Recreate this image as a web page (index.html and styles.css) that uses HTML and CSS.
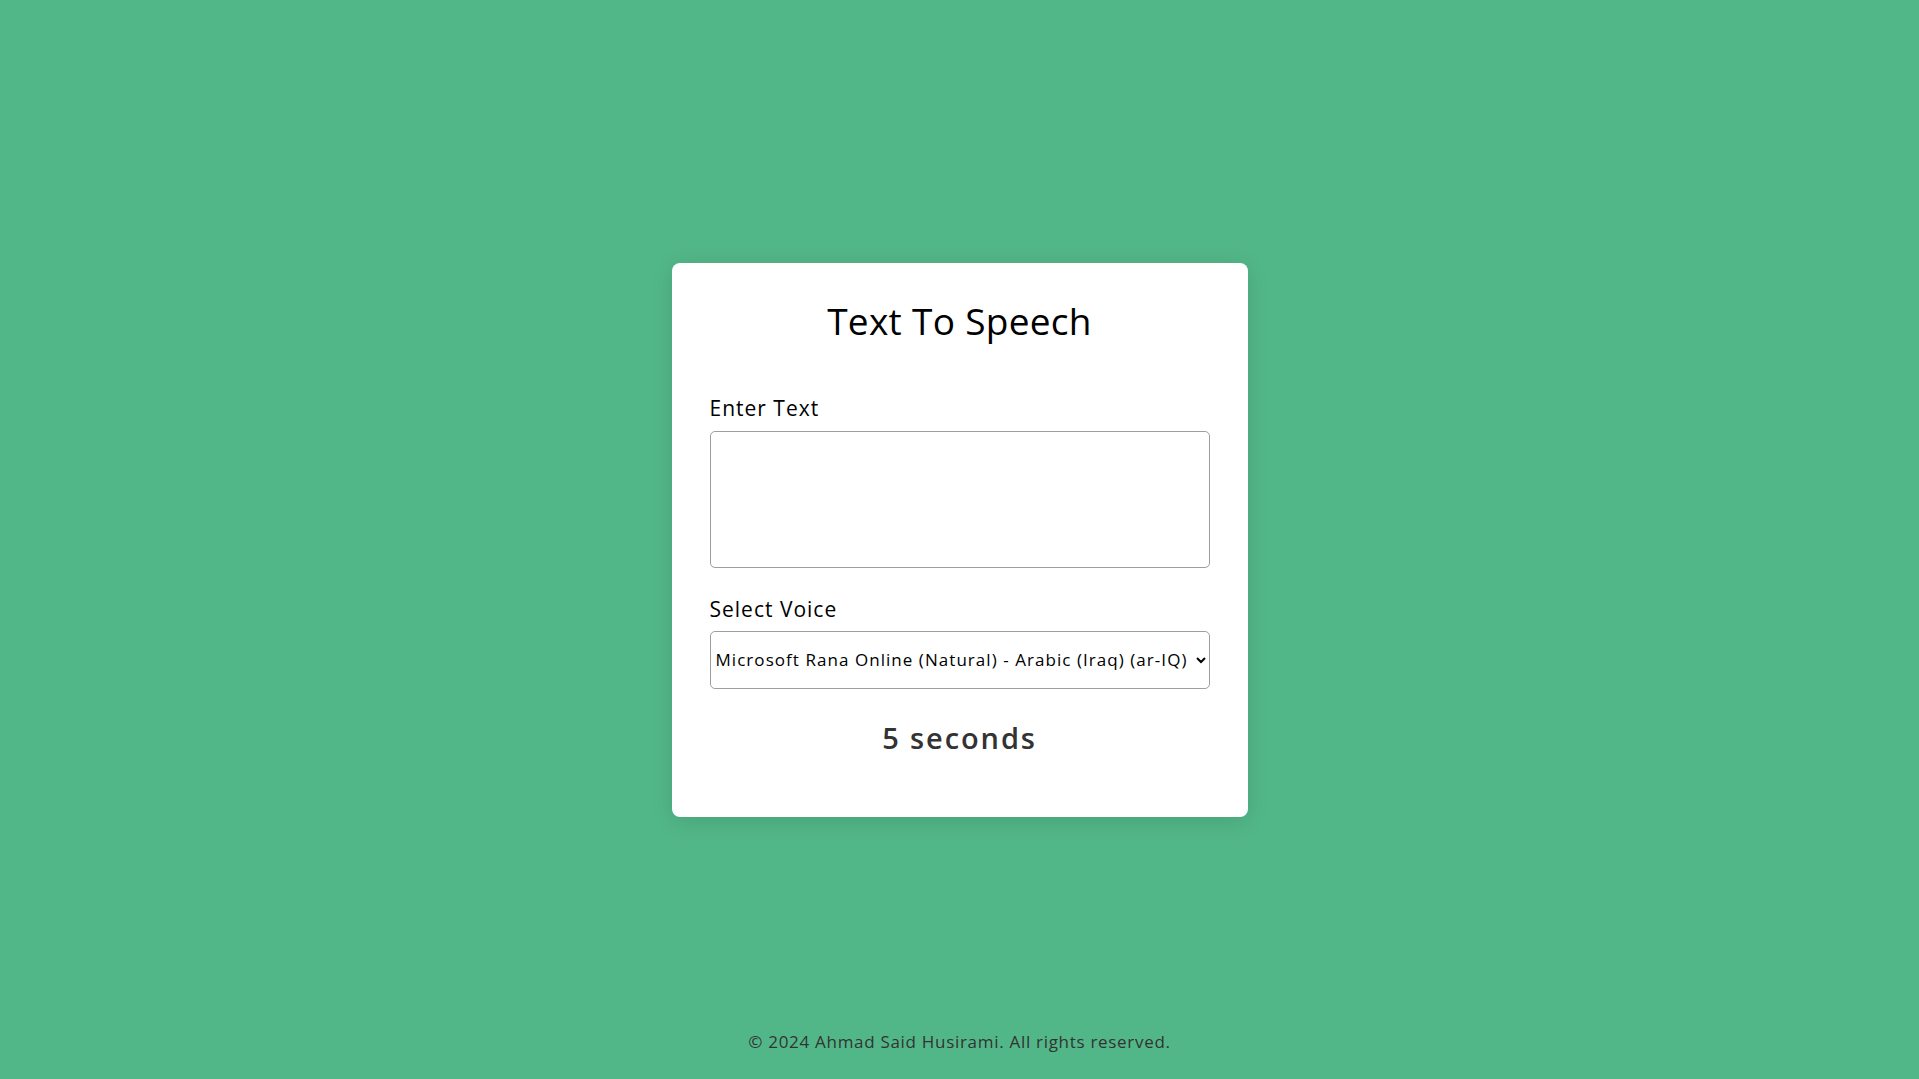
FILE: index.html
```html
<!DOCTYPE html>
<html lang="en">
<head>
<meta charset="UTF-8">
<title>Text To Speech</title>
<link rel="stylesheet" href="styles.css">
</head>
<body>
<div class="page">
  <main class="card">
    <h1 class="title">Text To Speech</h1>
    <label class="label" for="text">Enter Text</label>
    <textarea id="text" class="textarea"></textarea>
    <label class="label label-voice" for="voice">Select Voice</label>
    <select id="voice" class="select">
      <option>Microsoft Rana Online (Natural) - Arabic (Iraq) (ar-IQ)</option>
    </select>
    <div class="timer">5 seconds</div>
  </main>
  <footer class="footer">© 2024 Ahmad Said Husirami. All rights reserved.</footer>
</div>
</body>
</html>
```
FILE: styles.css
```css
* { box-sizing: border-box; }
html, body { margin: 0; padding: 0; }
body {
  background: #52b788;
  font-family: "Open Sans", "Liberation Sans", sans-serif;
  color: #000;
}
.page {
  height: 100vh;
  display: grid;
  grid-template-rows: 1fr auto 1fr;
}
.card {
  grid-row: 2;
  justify-self: center;
  width: 576px;
  height: 554px;
  background: #fff;
  border-radius: 8px;
  box-shadow: 0 4px 22px rgba(0, 0, 0, 0.12);
  padding: 31px 38px 0 38px;
  display: flex;
  flex-direction: column;
}
.title {
  margin: 0;
  font-size: 37px;
  line-height: 54px;
  font-weight: 500;
  letter-spacing: 0.3px;
  text-align: center;
  color: #000;
}
.label {
  display: block;
  margin-top: 45px;
  font-size: 21px;
  line-height: 30px;
  letter-spacing: 1px;
  color: #000;
}
.label-voice { margin-top: 26px; }
.textarea {
  margin-top: 8px;
  width: 100%;
  height: 137px;
  border: 1px solid #9e9e9e;
  border-radius: 5px;
  resize: none;
  font-family: inherit;
  font-size: 16px;
  padding: 8px;
  background: #fff;
}
.select {
  margin-top: 7px;
  width: 100%;
  height: 58px;
  border: 1px solid #9e9e9e;
  border-radius: 5px;
  font-family: inherit;
  font-size: 17px;
  letter-spacing: 1.05px;
  color: #000;
  background: #fff;
  padding: 0 1px;
}
.timer {
  margin-top: 28px;
  text-align: center;
  font-size: 29px;
  line-height: 42px;
  font-weight: 600;
  letter-spacing: 1.9px;
  color: #333;
}
.footer {
  grid-row: 3;
  align-self: end;
  text-align: center;
  font-size: 17px;
  line-height: 24px;
  letter-spacing: 0.7px;
  color: #333;
  padding-bottom: 25px;
}
```
